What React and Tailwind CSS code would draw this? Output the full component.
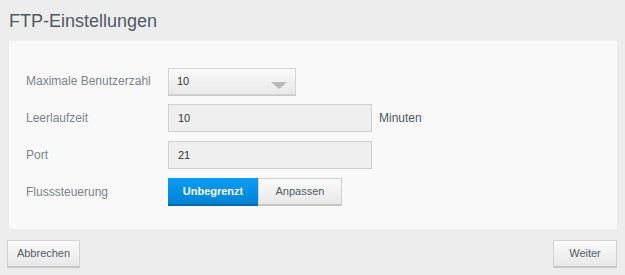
import React from "react";

const rowLabel = "w-[142px] text-[12px] text-[#7c848c]";
const inputBox =
  "h-[28px] border border-[#cfcfcf] bg-[#efefef] pl-[9px] flex items-center text-[11px] text-[#333]";

export default function App() {
  return (
    <div className="w-[625px] h-[275px] bg-[#ededed] font-['Liberation_Sans',Arial,sans-serif] overflow-hidden">
      <div className="h-[41px] pl-[9px] pt-[10px] text-[18px] leading-[22px] text-[#4e5966]">
        FTP-Einstellungen
      </div>
      <div className="mx-[9px] w-[608px] h-[188px] bg-[#f9f9f9] pl-[17px] pt-[26px] flex flex-col gap-[9px]">
        {/* Maximale Benutzerzahl */}
        <div className="flex items-center h-[28px]">
          <div className={rowLabel}>Maximale Benutzerzahl</div>
          <div className="relative w-[128px] h-[27px] border border-[#d4d4d4] bg-gradient-to-b from-[#fafafa] to-[#e9e9e9] shadow-[0_1px_0_#c9c9c9] flex items-center pl-[8px] text-[11px] text-[#333]">
            10
            <div className="absolute right-[8px] top-[13px] w-0 h-0 border-l-[8px] border-r-[8px] border-t-[7px] border-l-transparent border-r-transparent border-t-[#b9b9b9]" />
          </div>
        </div>
        {/* Leerlaufzeit */}
        <div className="flex items-center h-[28px]">
          <div className={rowLabel}>Leerlaufzeit</div>
          <div className={`${inputBox} w-[204px]`}>10</div>
          <div className="ml-[7px] text-[12px] text-[#4e5966]">Minuten</div>
        </div>
        {/* Port */}
        <div className="flex items-center h-[28px]">
          <div className={rowLabel}>Port</div>
          <div className={`${inputBox} w-[204px]`}>21</div>
        </div>
        {/* Flusssteuerung */}
        <div className="flex items-center h-[28px]">
          <div className={rowLabel}>Flusssteuerung</div>
          <div className="flex">
            <button className="w-[90px] h-[28px] bg-gradient-to-b from-[#0a9cf4] to-[#0283d4] border-b-2 border-[#036aa8] text-white text-[11px] font-bold">
              Unbegrenzt
            </button>
            <button className="w-[84px] h-[28px] border border-[#d2d2d2] border-b-2 border-b-[#c6c6c6] bg-gradient-to-b from-[#fbfbfb] to-[#e8e8e8] text-[#525c66] text-[11px]">
              Anpassen
            </button>
          </div>
        </div>
      </div>
      <div className="flex justify-between pl-[7px] pr-[8px] pt-[11px]">
        <button className="w-[73px] h-[28px] border border-[#d2d2d2] border-b-2 border-b-[#c6c6c6] bg-gradient-to-b from-[#fbfbfb] to-[#e8e8e8] text-[#525c66] text-[11px]">
          Abbrechen
        </button>
        <button className="w-[64px] h-[28px] border border-[#d2d2d2] border-b-2 border-b-[#c6c6c6] bg-gradient-to-b from-[#fbfbfb] to-[#e8e8e8] text-[#525c66] text-[11px]">
          Weiter
        </button>
      </div>
    </div>
  );
}
